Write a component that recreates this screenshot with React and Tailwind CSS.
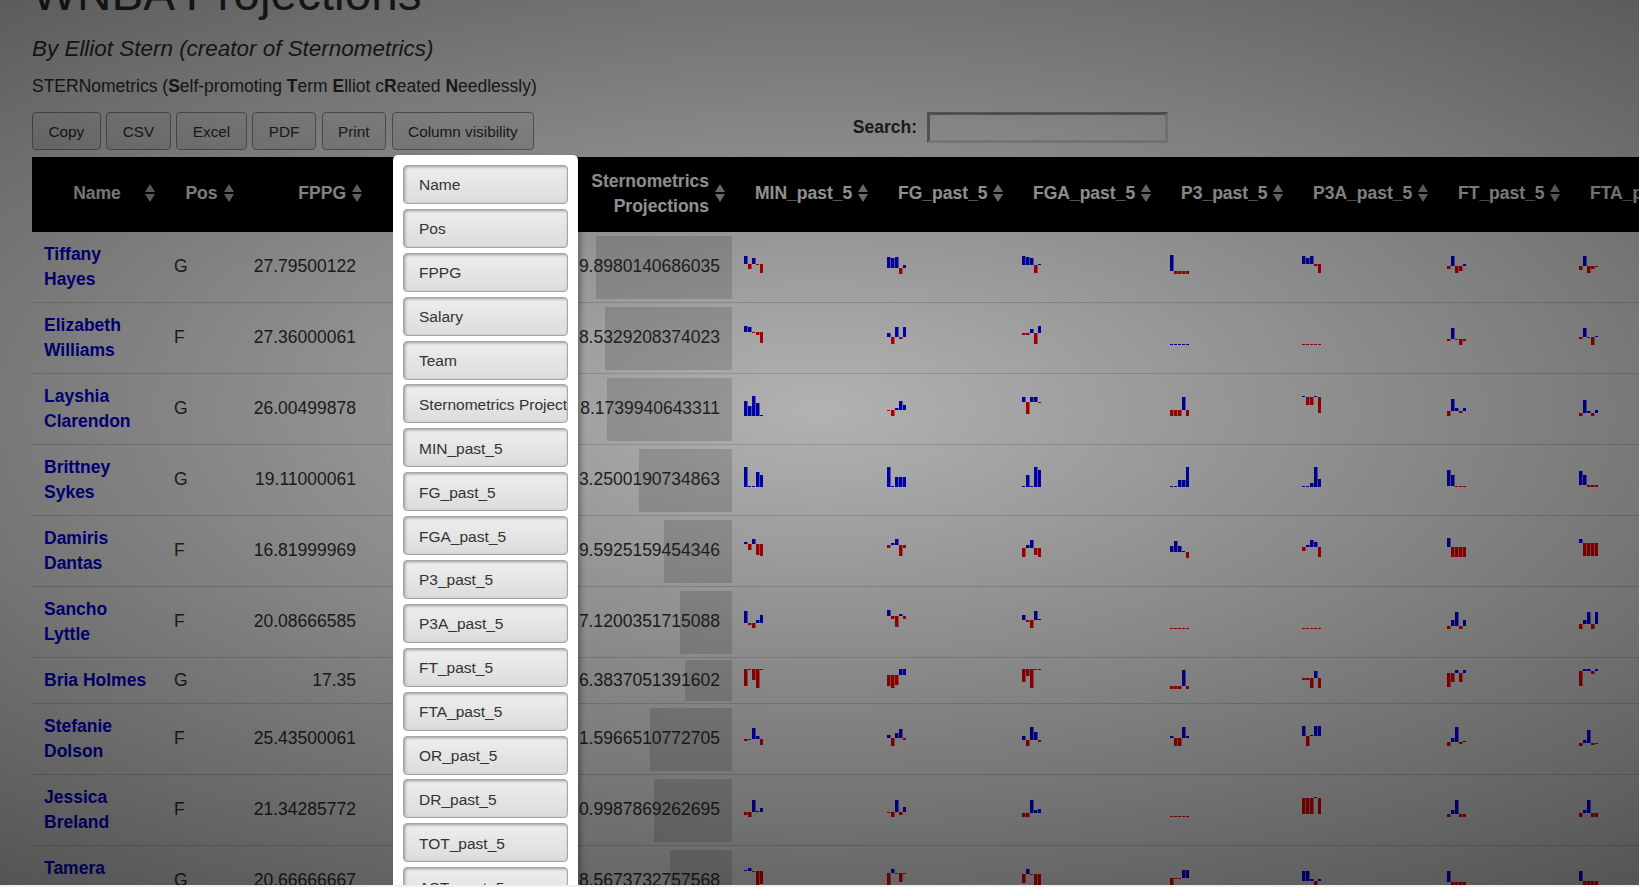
const columns = [
  { label: "Name", w: 130, align: "text-center" },
  { label: "Pos", w: 79, align: "text-center" },
  { label: "FPPG", w: 128, align: "text-right" },
  { label: "Salary", w: 100, align: "text-center" },
  { label: "Team", w: 80, align: "text-center" },
  { label: "Sternometrics Projections", w: 183, align: "text-right" },
  { label: "MIN_past_5", w: 143, align: "text-center" },
  { label: "FG_past_5", w: 135, align: "text-center" },
  { label: "FGA_past_5", w: 148, align: "text-center" },
  { label: "P3_past_5", w: 132, align: "text-center" },
  { label: "P3A_past_5", w: 145, align: "text-center" },
  { label: "FT_past_5", w: 132, align: "text-center" },
  { label: "FTA_past_5", w: 133, align: "text-center" },
];

const visibility = [
  "Name", "Pos", "FPPG", "Salary", "Team", "Sternometrics Projections",
  "MIN_past_5", "FG_past_5", "FGA_past_5", "P3_past_5", "P3A_past_5",
  "FT_past_5", "FTA_past_5", "OR_past_5", "DR_past_5", "TOT_past_5", "AST_past_5",
];

const dashRed = [19, [-1, -1, -1, -1, -1]];
const dashBlue = [20, [1, 1, 1, 1, 1]];

// sparks: [zero line y inside the svg, five bar values in px], in column order MIN..FTA
const players = [
  {
    name: "Tiffany Hayes", pos: "G", fppg: "27.79500122", proj: "9.8980140686035", bar: 136,
    sparks: [
      [10, [8, -5, 6, -1, -9]], [14, [11, 10, 11, -6, 3]], [11, [9, 8, 7, -8, 1]],
      [17, [16, -3, -3, -3, -3]], [10, [8, 6, 8, -2, -9]], [12, [-3, 10, -7, -5, 2]],
      [12, [-4, 10, -7, -3, -1]],
    ],
  },
  {
    name: "Elizabeth Williams", pos: "F", fppg: "27.36000061", proj: "8.5329208374023", bar: 127,
    sparks: [
      [7, [6, 5, -1, -3, -11]], [12, [4, -7, 10, -2, 10]], [8, [-2, -2, 4, -11, 7]],
      dashBlue, dashRed, [14, [-2, 11, -1, -6, -2]], [12, [-2, 9, -1, -8, 1]],
    ],
  },
  {
    name: "Layshia Clarendon", pos: "G", fppg: "26.00499878", proj: "8.1739940643311", bar: 125,
    sparks: [
      [20, [15, 10, 20, 13, 1]], [14, [-1, -6, 2, 9, 5]], [6, [5, -12, 5, 5, -1]],
      [14, [-6, -6, -6, 13, -6]], [1, [1, -8, -8, 1, -16]], [15, [-5, 12, 3, -2, 3]],
      [17, [-3, 13, 2, -3, 3]],
    ],
  },
  {
    name: "Brittney Sykes", pos: "G", fppg: "19.11000061", proj: "3.2500190734863", bar: 93,
    sparks: [
      [20, [20, 1, 1, 15, 12]], [20, [20, 1, 10, 10, 10]], [20, [1, 12, 1, 20, 17]],
      [20, [1, 1, 7, 7, 20]], [20, [1, 1, 4, 20, 8]], [19, [16, 11, -1, -1, -1]],
      [18, [14, 10, -2, -2, -2]],
    ],
  },
  {
    name: "Damiris Dantas", pos: "F", fppg: "16.81999969", proj: "9.5925159454346", bar: 68,
    sparks: [
      [6, [2, -6, 5, -11, -12]], [7, [-3, 2, 6, -11, -3]], [10, [-9, 3, 8, -7, -9]],
      [14, [6, 11, 6, 1, -6]], [9, [-4, 2, 7, 5, -10]], [9, [9, -10, -10, -10, -10]],
      [5, [4, -13, -13, -13, -13]],
    ],
  },
  {
    name: "Sancho Lyttle", pos: "F", fppg: "20.08666585", proj: "7.1200351715088", bar: 52,
    sparks: [
      [14, [12, -2, -5, 3, 8]], [7, [6, -3, -11, 2, -3]], [11, [5, -2, -8, 9, 1]],
      dashRed, dashRed, [17, [-3, 6, 14, -3, 6]], [15, [-5, 4, 12, -5, 12]],
    ],
  },
  {
    name: "Bria Holmes", pos: "G", fppg: "17.35", proj: "6.3837051391602", bar: 47, single: true,
    sparks: [
      [1, [-17, -1, -11, -19, -1]], [7, [-11, -13, -10, 6, 6]], [1, [-13, -7, -19, -1, -1]],
      [18, [-3, -3, -3, 16, -3]], [10, [-2, -2, -10, 7, -10]], [5, [-14, -9, 3, -9, 3]],
      [3, [-15, 2, 2, -3, 2]],
    ],
  },
  {
    name: "Stefanie Dolson", pos: "F", fppg: "25.43500061", proj: "1.5966510772705", bar: 82,
    sparks: [
      [13, [-2, -1, 11, 3, -6]], [12, [3, -8, 5, 9, -2]], [14, [4, -6, 13, 8, -2]],
      [12, [2, -8, -8, 11, 2]], [10, [10, -10, 1, 10, 10]], [16, [-4, 4, 15, -2, 1]],
      [17, [-3, 3, 13, -2, -1]],
    ],
  },
  {
    name: "Jessica Breland", pos: "F", fppg: "21.34285772", proj: "0.9987869262695", bar: 78,
    sparks: [
      [15, [-3, -5, 12, 1, 4]], [15, [-1, -5, 12, -3, 5]], [16, [-4, -4, 13, 3, 4]],
      dashRed, [1, [-16, -16, -16, 1, -16]], [17, [-3, 4, 14, -3, -3]],
      [16, [-4, 3, 13, -4, -4]],
    ],
  },
  {
    name: "Tamera", pos: "G", fppg: "20.66666667", proj: "8.5673732757568", bar: 62,
    sparks: [
      [3, [1, 3, -1, -19, -13]], [5, [-16, 4, -1, -9, -1]], [6, [-9, 5, -1, -15, -15]],
      [10, [-12, -1, -1, 8, 8]], [13, [10, 10, 2, -6, 2]], [14, [11, -6, -6, -6, -6]],
      [13, [10, -7, -7, -7, -7]],
    ],
    tall: true,
  },
];

const SortArrows = () => (
  <svg width="10" height="18" viewBox="0 0 10 18" className="absolute right-[7px] top-[27px]">
    <polygon points="5,0 10,8 0,8" fill="#b8b8b8" />
    <polygon points="0,10 10,10 5,18" fill="#b8b8b8" />
  </svg>
);

const Spark = ({ zero, values }) => (
  <svg width="19" height="26" className="block">
    {values.map((v, i) => (
      <rect
        key={i}
        x={i * 4}
        y={v > 0 ? zero - v : zero}
        width={Math.abs(v) === 1 ? 3 : 3.5}
        height={Math.abs(v)}
        fill={v > 0 ? "#0000ff" : "#ff0000"}
      />
    ))}
  </svg>
);

const ToolbarButton = ({ children }) => (
  <button className="h-[38px] pt-[2px] px-[15.5px] mr-[5.6px] border border-[#999] rounded-sm bg-gradient-to-b from-white to-[#e9e9e9] text-[15.3px] text-[#333]">
    {children}
  </button>
);

export default function App() {
  return (
    <div className="w-[1639px] h-[887px] overflow-hidden bg-[#f1f1f1] font-['Liberation_Sans',Arial,sans-serif] text-[#333]">
      <div className="relative h-[885px] overflow-hidden bg-white">
        <div className="pl-8">
          <h1 className="-mt-[31px] text-[47.7px] leading-[50px] font-normal text-[#333]">WNBA Projections</h1>
          <h2 className="mt-[14px] text-[22.45px] leading-[32px] italic font-normal">
            By Elliot Stern (creator of Sternometrics)
          </h2>
          <p className="mt-[9px] text-[17.5px] leading-[25px] whitespace-nowrap">
            STERNometrics (<b>S</b>elf-promoting <b>T</b>erm <b>E</b>lliot c<b>R</b>eated <b>N</b>eedlessly)
          </p>

          <div className="mt-[13px] flex items-start h-[38px]">
            <ToolbarButton>Copy</ToolbarButton>
            <ToolbarButton>CSV</ToolbarButton>
            <ToolbarButton>Excel</ToolbarButton>
            <ToolbarButton>PDF</ToolbarButton>
            <ToolbarButton>Print</ToolbarButton>
            <ToolbarButton>Column visibility</ToolbarButton>
            <label className="ml-[313px] flex items-center h-[31px] gap-[10px] text-[17.5px] font-bold">
              Search:
              <input className="w-[241px] h-[31px] bg-white border-[3px] border-solid border-t-[#9a9a9a] border-l-[#9a9a9a] border-b-[#dedede] border-r-[#dedede]" />
            </label>
          </div>

          <table className="mt-[7px] table-fixed border-separate border-spacing-0 w-[1668px] text-[17.5px] leading-[25px]">
            <colgroup>
              {columns.map((c) => (
                <col key={c.label} style={{ width: c.w }} />
              ))}
            </colgroup>
            <thead>
              <tr className="h-[75px] bg-black text-white">
                {columns.map((c) => (
                  <th key={c.label} className={`relative px-[23px] pb-[2px] font-bold whitespace-normal ${c.align}`}>
                    {c.label}
                    <SortArrows />
                  </th>
                ))}
              </tr>
            </thead>
            <tbody>
              {players.map((p) => (
                <tr
                  key={p.name}
                  className={`[&>td]:border-b [&>td]:border-[#d9d9d9] ${p.single ? "h-[46px]" : "h-[71px]"}`}
                >
                  <td className="px-3 py-[10px] font-bold text-[#0000e6]">
                    {p.name}
                    {p.tall && <br />}
                    {p.tall && "Young"}
                  </td>
                  <td className={`px-3 ${p.single ? "" : "pb-[2px]"}`}>{p.pos}</td>
                  <td className={`pl-3 pr-[13px] text-right ${p.single ? "" : "pb-[2px]"}`}>{p.fppg}</td>
                  <td></td>
                  <td></td>
                  <td className={`h-px pr-0 ${p.single ? "pt-[2px] pb-[2px]" : "pt-1 pb-[3px]"}`}>
                    <div className="h-full flex justify-end">
                      <div
                        className={`flex items-center justify-end pr-3 bg-[#dcdcdc] whitespace-nowrap ${p.single ? "" : "pb-[2px]"}`}
                        style={{ width: p.bar }}
                      >
                        {p.proj}
                      </div>
                    </div>
                  </td>
                  {p.sparks.map(([zero, values], i) => (
                    <td key={i} className="pl-3">
                      <Spark zero={zero} values={values} />
                    </td>
                  ))}
                </tr>
              ))}
            </tbody>
          </table>
        </div>

        {/* fondo del popup de columnas */}
        <div className="absolute inset-0 z-10 bg-[radial-gradient(ellipse_1450px_650px_at_820px_410px,rgba(0,0,0,0.3)_0%,rgba(0,0,0,0.7)_100%)]"></div>

        <div className="absolute z-20 left-[393px] top-[155px] w-[185px] pt-[10px] px-[10px] pb-[6px] bg-white rounded-[5px] shadow-[3px_3px_5px_rgba(0,0,0,0.3)]">
          {visibility.map((label) => (
            <button
              key={label}
              className="block w-[165px] h-[39px] mb-[4.9px] pl-[15px] pt-px text-left text-[15.5px] text-[#333] whitespace-nowrap overflow-hidden border border-[#a5a5a5] rounded-sm bg-gradient-to-b from-[#eeeeee] to-[#dcdcdc] shadow-[inset_1px_1px_3px_#999]"
            >
              {label}
            </button>
          ))}
        </div>
      </div>
    </div>
  );
}
